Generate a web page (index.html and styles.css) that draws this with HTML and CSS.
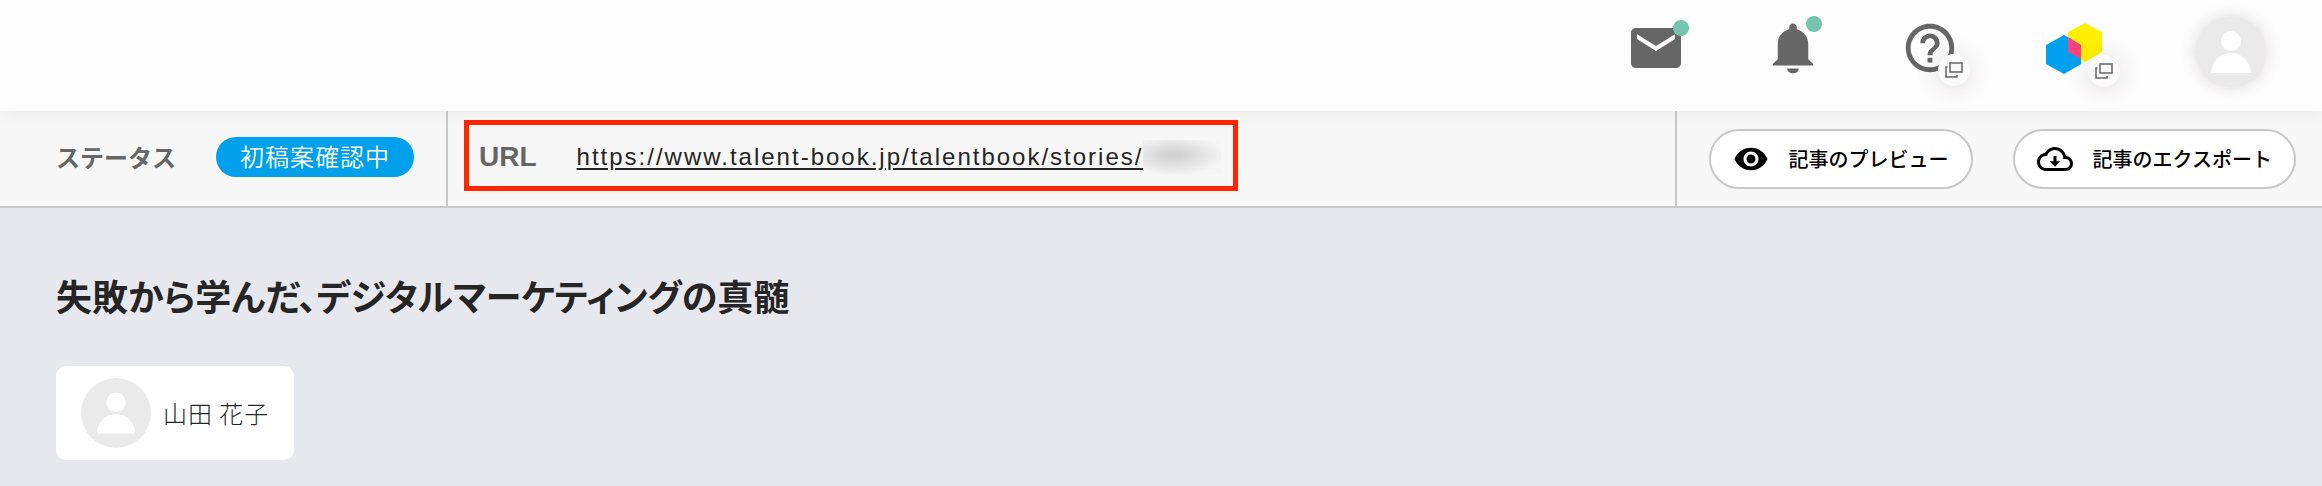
FILE: index.html
```html
<!DOCTYPE html>
<html lang="ja">

<head>
    <meta charset="UTF-8">
    <meta name="viewport" content="width=device-width, initial-scale=1.0">
    <title>talentbook</title>

    <link rel="stylesheet" href="styles.css">
</head>

<body>
<header class="header">
    <nav class="header-menu">
        <a href="#" class="menu-item" aria-label="メッセージ">
            <svg class="menu-icon" viewBox="0 0 24 24">
                <path d="M20 4H4c-1.100 0-2 .9-2 2v12c0 1.100.9 2 2 2h16c1.100 0 2-.9 2-2V6c0-1.100-.9-2-2-2zm-.4 4.400L12 13.200 4.400 8.400V6.500L12 11.200l7.600-4.700z"/>
            </svg>
            <span class="dot dot-mail"></span>
        </a>
        <a href="#" class="menu-item" aria-label="お知らせ">
            <svg class="menu-icon" viewBox="0 0 24 24">
                <path d="M9.700 20.200h4.600c0 1.200-1 1.900-2.300 1.900s-2.300-.7-2.300-1.900zM18.100 16.500v-6c0-3-1.700-5.200-4.600-6V3.700c0-.8-.7-1.500-1.500-1.500s-1.500.7-1.500 1.500v.8c-2.900.8-4.600 3-4.600 6v6L4 18.300V19h16v-.7z"/>
            </svg>
            <span class="dot dot-bell"></span>
        </a>
        <a href="#" class="menu-item" aria-label="ヘルプ">
            <svg class="menu-icon icon-help" viewBox="0 0 24 24">
                <path d="M11 18h2v-2h-2v2zm1-16C6.480 2 2 6.480 2 12s4.480 10 10 10 10-4.480 10-10S17.520 2 12 2zm0 18c-4.410 0-8-3.590-8-8s3.590-8 8-8 8 3.590 8 8-3.590 8-8 8zm0-14c-2.210 0-4 1.790-4 4h2c0-1.100.9-2 2-2s2 .9 2 2c0 2-3 1.750-3 5h2c0-2.250 3-2.500 3-5 0-2.210-1.790-4-4-4z"/>
            </svg>
            <span class="window-badge">
                <svg viewBox="0 0 18 16"><path d="M5 1h12v9H5zM2.500 5H1v10h11v-2"/></svg>
            </span>
        </a>
        <a href="#" class="menu-item" aria-label="talentbook">
            <svg class="logo" viewBox="0 0 60 60">
                <path fill="#fff000" d="M48 5l17 9v20l-17 10-17-10V14z"/>
                <path fill="#00a0ee" d="M27 17l17 10v19L27 56 9 46V27z"/>
                <path fill="#ff4081" d="M31 19l13 8v14l-13-7z"/>
            </svg>
            <span class="window-badge badge-logo">
                <svg viewBox="0 0 18 16"><path d="M5 1h12v9H5zM2.500 5H1v10h11v-2"/></svg>
            </span>
        </a>
    </nav>
    <a href="#" class="account" aria-label="アカウント">
        <svg class="avatar" viewBox="0 0 72 72">
            <circle cx="36" cy="36" r="36" fill="#eaeaea"/>
            <circle cx="36" cy="25" r="10" fill="#fff"/>
            <path fill="#fff" d="M16 57c1-12 9-20 20-20s19 8 20 20z"/>
        </svg>
    </a>
</header>

<section class="toolbar">
    <div class="status">
        <span class="label">ステータス</span>
        <span class="status-badge">初稿案確認中</span>
    </div>
    <div class="url-area">
        <div class="url-box">
            <span class="url-label">URL</span>
            <a href="#" class="url">https://www.talent-book.jp/talentbook/stories/</a>
            <span class="url-mask"></span>
        </div>
    </div>
    <div class="actions">
        <button type="button" class="action">
            <svg viewBox="0 0 24 24">
                <path d="M12 4.500C7 4.500 2.730 7.610 1 12c1.730 4.390 6 7.500 11 7.500s9.270-3.110 11-7.500c-1.730-4.390-6-7.500-11-7.500zM12 17c-2.760 0-5-2.240-5-5s2.240-5 5-5 5 2.240 5 5-2.240 5-5 5zm0-8c-1.660 0-3 1.340-3 3s1.340 3 3 3 3-1.340 3-3-1.340-3-3-3z"/>
            </svg>
            記事のプレビュー
        </button>
        <button type="button" class="action">
            <svg viewBox="0 0 24 24">
                <path d="M19.350 10.040C18.670 6.590 15.640 4 12 4 9.110 4 6.600 5.640 5.350 8.040 2.340 8.360 0 10.910 0 14c0 3.310 2.690 6 6 6h13c2.760 0 5-2.240 5-5 0-2.640-2.050-4.780-4.650-4.960zM19 18H6c-2.210 0-4-1.790-4-4s1.790-4 4-4h.7C7.400 7.700 9.500 6 12 6c3 0 5.500 2.500 5.500 5.500v.5H19c1.660 0 3 1.340 3 3s-1.340 3-3 3zM11 10h2v3.500h2.600L12 17.100l-3.600-3.600H11z"/>
            </svg>
            記事のエクスポート
        </button>
    </div>
</section>

<main class="content">
    <h1 class="title">失敗から学んだ、デジタルマーケティングの真髄</h1>
    <div class="member">
        <svg class="avatar-small" viewBox="0 0 72 72">
            <circle cx="36" cy="36" r="36" fill="#eaeaea"/>
            <circle cx="36" cy="25" r="10" fill="#fff"/>
            <path fill="#fff" d="M16 57c1-12 9-20 20-20s19 8 20 20z"/>
        </svg>
        <span>山田 花子</span>
    </div>
</main>
</body>

</html>
```
FILE: styles.css
```css
* {
    box-sizing: border-box;
}

body {
    margin: 0;
    min-height: 100vh;
    background-color: #e7e8ee;
    color: #252525;
    font-family: "Noto Sans CJK JP", sans-serif;
    font-size: 24px;
    line-height: 36px;
}

.header {
    display: flex;
    justify-content: flex-end;
    gap: 98px;
    position: relative;
    padding: 16px 55px 23px;
    background-color: #fdfdfd;
    box-shadow: 0 2px 16px rgba(0, 0, 0, 0.06);
}

.header-menu {
    display: flex;
    align-items: center;
    gap: 77px;
    height: 64px;
}

.menu-item {
    display: block;
    position: relative;
    width: 60px;
    height: 60px;
}

.menu-icon {
    display: block;
    width: 60px;
    height: 60px;
    fill: #666;
}

.icon-help {
    padding: 1px;
}

.logo {
    display: block;
    width: 60px;
    height: 60px;
    overflow: visible;
}

.dot {
    position: absolute;
    top: 2px;
    right: -3px;
    width: 16px;
    height: 16px;
    border-radius: 50%;
    background-color: #74c4b0;
}

.dot-bell {
    top: -2px;
    right: 1px;
}

.window-badge {
    display: flex;
    align-items: center;
    justify-content: center;
    position: absolute;
    right: -10px;
    bottom: -8px;
    width: 32px;
    height: 32px;
    border-radius: 50%;
    background-color: #fafafa;
    box-shadow: 0 2px 24px rgba(60, 0, 20, 0.16);
}

.badge-logo {
    right: -23px;
    bottom: -9px;
}

.window-badge svg {
    width: 18px;
    height: 16px;
    fill: none;
    stroke: #666;
    stroke-width: 1.5;
}

.account {
    width: 72px;
    height: 72px;
    border-radius: 50%;
    box-shadow: 0 0 16px rgba(60, 0, 20, 0.14);
}

.avatar {
    display: block;
    width: 72px;
    height: 72px;
}

.toolbar {
    display: flex;
    border-bottom: 2px solid #c8c8c8;
    background-color: #f7f7f7;
}

.status {
    display: flex;
    align-items: center;
    gap: 40px;
    padding: 0 32px 3px 56px;
    border-right: 2px solid #c8c8c8;
}

.label {
    color: #666;
    font-weight: 700;
}

.status-badge {
    height: 40px;
    padding: 0 24px;
    border-radius: 20px;
    background-color: #00a0ea;
    color: #fff;
    font-weight: 350;
    line-height: 38px;
    letter-spacing: 1px;
}

.url-area {
    display: flex;
    align-items: center;
    flex: 1;
    padding: 9px 16px 15px;
}

.url-box {
    display: flex;
    align-items: center;
    height: 71px;
    padding: 2px 12px 0 10px;
    border: 5px solid #ff2600;
    font-family: "Liberation Sans", Arial, sans-serif;
}

.url-label {
    margin-right: 40px;
    color: #666;
    font-size: 28px;
    font-weight: bold;
}

.url {
    color: #252525;
    letter-spacing: 2px;
    text-underline-offset: 3px;
}

.url-mask {
    width: 78px;
    height: 34px;
    background: radial-gradient(ellipse at 40% 45%, #d2d2d2 10%, #f5f5f5 75%);
}

.actions {
    display: flex;
    align-items: center;
    gap: 40px;
    padding: 0 26px 0 32px;
    border-left: 2px solid #c8c8c8;
}

.action {
    display: flex;
    align-items: center;
    gap: 20px;
    height: 60px;
    padding: 0 22px;
    border: 2px solid #c8c8c8;
    border-radius: 30px;
    background-color: #fff;
    color: #000;
    font-family: "Noto Sans CJK JP", sans-serif;
    font-size: 20px;
    font-weight: 500;
    line-height: 28px;
}

.action svg {
    width: 36px;
    height: 36px;
}

.content {
    padding: 61px 56px 26px;
}

.title {
    margin: 0 0 45px;
    font-size: 36px;
    font-weight: 700;
    font-feature-settings: "palt";
    line-height: 52px;
}

.member {
    display: flex;
    align-items: center;
    gap: 12px;
    width: fit-content;
    padding: 12px 25px;
    border-radius: 10px;
    background-color: #fff;
    font-weight: 300;
    letter-spacing: 1px;
}

.avatar-small {
    width: 70px;
    height: 70px;
}
```
